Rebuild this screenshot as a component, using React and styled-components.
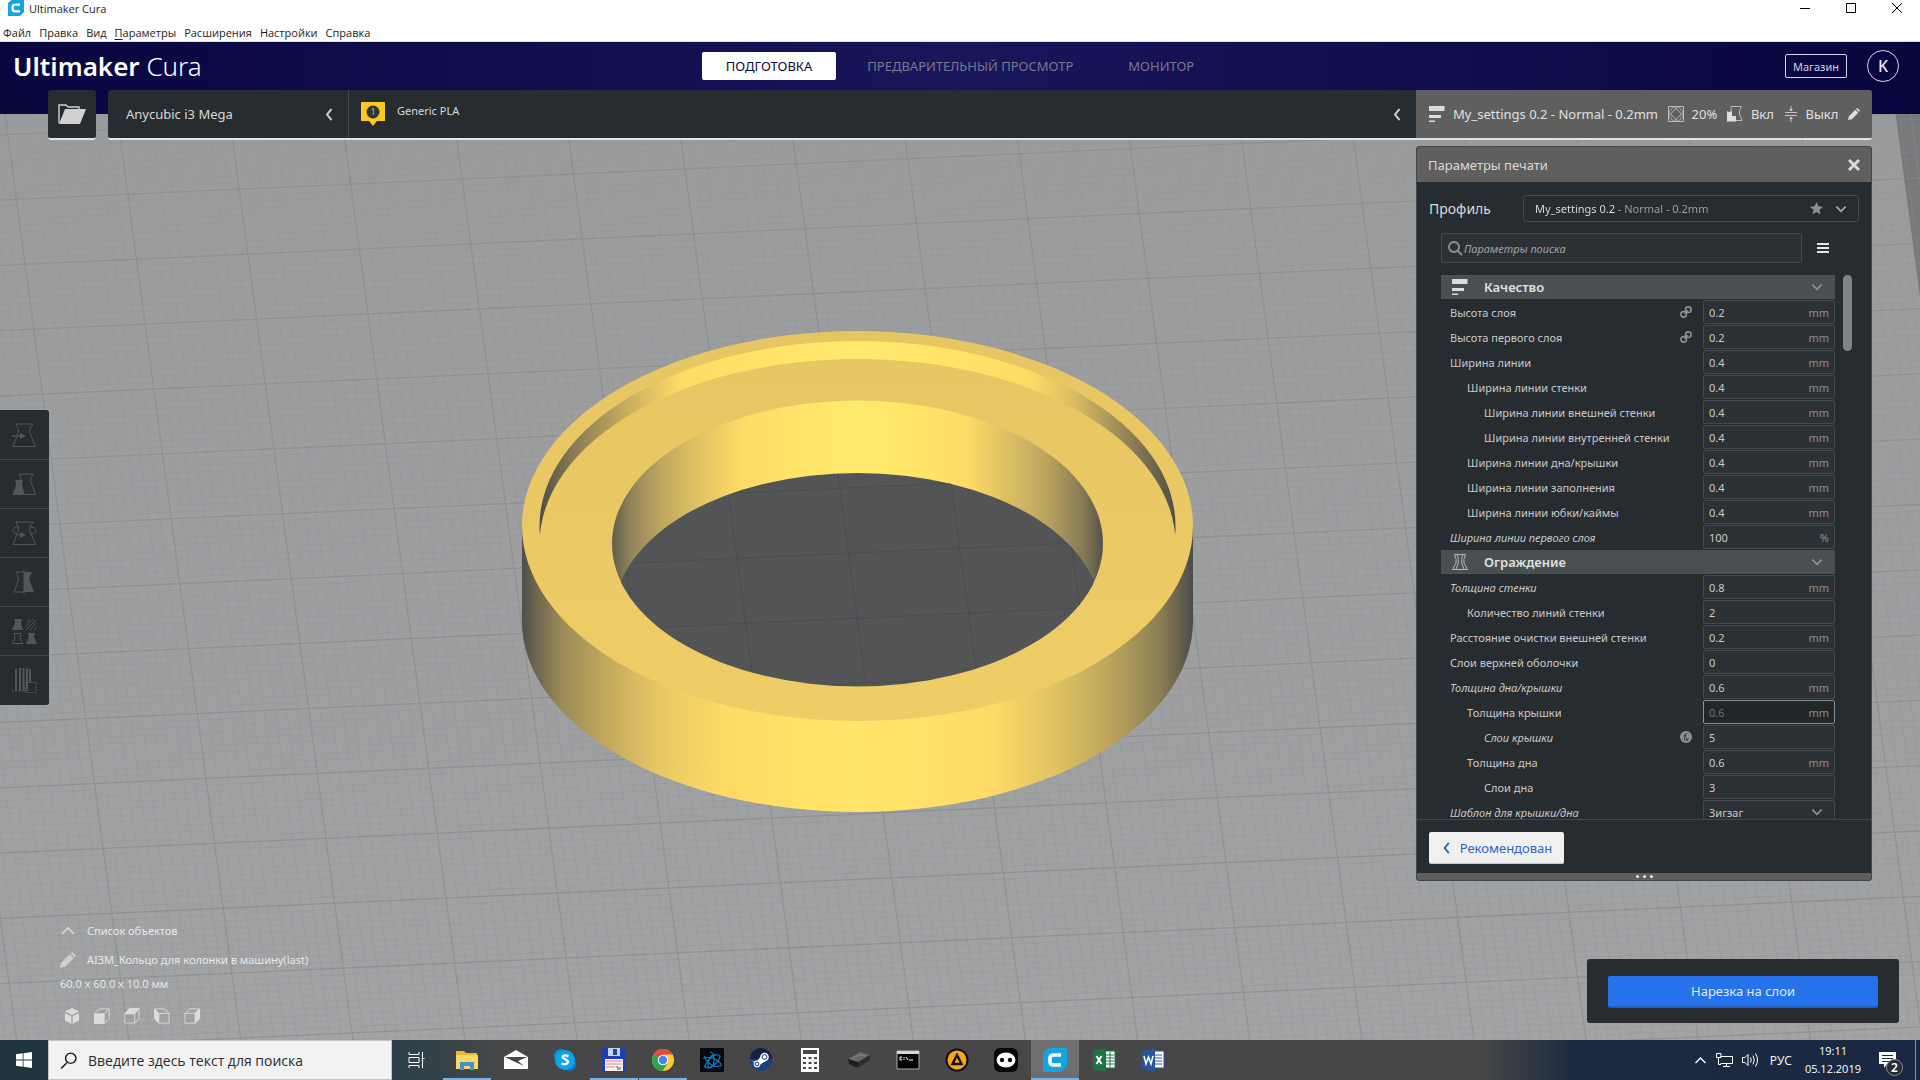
import React from "react";
import styled, { createGlobalStyle, css } from "styled-components";

const color = {
  panel: "#272c30",
  line: "#41474a",
  field: "#2c3135",
  fieldLine: "#44494d",
  text: "#dadada",
  dim: "#8c9092",
  grey: "#5f5f5f",
  category: "#4a4f52",
  blue: "#2672ea",
};

const GlobalStyle = createGlobalStyle`
  * { box-sizing: border-box; }
  body { margin: 0; background: #9b9c9d; }
  body, button, input, select {
    font-family: "Noto Sans", "Open Sans", sans-serif;
    font-size: 11px;
  }
  button { border: 0; padding: 0; background: none; color: inherit; cursor: pointer; }
  svg { display: block; flex: none; }
`;

/* ---------- window chrome ---------- */

const Page = styled.div`
  min-height: 100vh;
  display: flex;
  flex-direction: column;
`;

const WindowChrome = styled.header`
  background: #fff;
  color: #1c1c1c;
  height: 42px;
  flex: none;
  display: flex;
  flex-direction: column;
  overflow: hidden;
  font-family: "Open Sans", "Noto Sans", sans-serif;
  border-bottom: 1px solid #dcdcec;
`;

const TitleBar = styled.div`
  display: flex;
  align-items: center;
  height: 24px;
  padding: 0 0 8px 8px;
  gap: 5px;
  font-size: 11px;
`;

const WindowButtons = styled.div`
  display: flex;
  margin-left: auto;
  button {
    width: 46px;
    height: 16px;
    display: flex;
    align-items: center;
    justify-content: center;
  }
`;

const MenuBar = styled.nav`
  display: flex;
  gap: 8px;
  padding-left: 3px;
  height: 17px;
  align-items: center;
  button {
    font-family: inherit;
    font-size: 11px;
    line-height: 16px;
  }
  u { text-underline-offset: 2px; }
`;

/* ---------- stage ---------- */

const Stage = styled.main`
  position: relative;
  flex: 1;
  display: flex;
  flex-direction: column;
  overflow: hidden;
`;

const SceneCanvas = styled.svg`
  position: absolute;
  inset: 0;
  width: 100%;
  height: 100%;
`;

const AppHeader = styled.div`
  position: relative;
  height: 72px;
  margin-bottom: -24px;
  padding: 8px 13px 32px;
  display: grid;
  grid-template-columns: 1fr auto 1fr;
  align-items: center;
  background: linear-gradient(90deg, #08063f 0%, #131052 35%, #1a165c 50%, #131052 65%, #08063f 100%);
`;

const Logo = styled.div`
  color: #fff;
  font-size: 26px;
  line-height: 30px;
  font-weight: 600;
  span { font-weight: 300; }
`;

const Tabs = styled.nav`
  display: flex;
  gap: 7px;
`;

const Tab = styled.button`
  height: 28px;
  padding: 0 24px;
  border-radius: 2px;
  font-size: 13px;
  color: ${(p) => (p.$active ? "#0b0a45" : "#77788f")};
  background: ${(p) => (p.$active ? "#fff" : "transparent")};
`;

const Account = styled.div`
  display: flex;
  justify-content: flex-end;
  align-items: center;
  gap: 20px;
  padding-right: 8px;
`;

const ShopButton = styled.button`
  height: 24px;
  width: 62px;
  border: 1px solid #d5d5e6;
  border-radius: 2px;
  color: #d0d0e4;
  font-size: 11px;
`;

const Avatar = styled.button`
  width: 32px;
  height: 32px;
  border: 1px solid #d5d5e6;
  border-radius: 50%;
  color: #e4e4ee;
  font-size: 16px;
  font-weight: 500;
`;

const ConfigRow = styled.div`
  position: relative;
  display: flex;
  gap: 12px;
  padding: 0 48px;
`;

const barBlock = css`
  height: 50px;
  border-bottom: 2px solid #e4e4e4;
  border-radius: 3px;
  background: ${color.panel};
  color: ${color.text};
`;

const OpenButton = styled.button`
  ${barBlock}
  width: 48px;
  display: flex;
  align-items: center;
  justify-content: center;
`;

const ConfigBar = styled.div`
  ${barBlock}
  flex: 1;
  display: flex;
  overflow: hidden;
`;

const MachineButton = styled.button`
  width: 241px;
  padding: 0 12px 0 18px;
  display: flex;
  align-items: center;
  justify-content: space-between;
  border-right: 1px solid ${color.line};
  font-size: 13px;
`;

const MaterialButton = styled.button`
  flex: 1;
  padding: 0 12px;
  display: flex;
  align-items: center;
  gap: 12px;
  span {
    margin-right: auto;
    padding-bottom: 8px;
  }
`;

const SummaryButton = styled.button`
  width: 456px;
  padding: 0 12px 0 13px;
  display: flex;
  align-items: center;
  justify-content: space-between;
  background: ${color.grey};
  font-size: 13px;
  color: #e0e0e0;
`;

const SummaryItem = styled.span`
  display: flex;
  align-items: center;
  gap: 8px;
`;

const Workspace = styled.div`
  position: relative;
  flex: 1;
  display: flex;
  justify-content: space-between;
`;

const LeftColumn = styled.div`
  display: flex;
  flex-direction: column;
  padding-top: 270px;
`;

const RightColumn = styled.div`
  display: flex;
  flex-direction: column;
  align-items: flex-end;
  padding: 6px 21px 17px 0;
`;

const ToolStrip = styled.div`
  width: 49px;
  background: ${color.line};
  border: solid ${color.panel};
  border-width: 1px 0;
  border-radius: 0 3px 3px 0;
  overflow: hidden;
  display: flex;
  flex-direction: column;
  gap: 1px;
`;

const ToolButton = styled.button`
  height: 48px;
  background: ${color.panel};
  display: flex;
  align-items: center;
  justify-content: center;
  color: #50565a;
`;

const ObjectPanel = styled.section`
  margin-top: auto;
  padding: 0 0 12px 60px;
  color: #e6e6e6;
  display: flex;
  flex-direction: column;
  align-items: flex-start;
`;

const ObjectRow = styled.button`
  display: flex;
  align-items: center;
  gap: 11px;
  height: 29px;
  color: #e8e8e8;
  font-size: 11px;
`;

const ObjectSize = styled.div`
  line-height: 20px;
  font-size: 11px;
`;

const ViewButtons = styled.div`
  display: flex;
  gap: 6px;
  padding-top: 10px;
  button {
    width: 24px;
    height: 24px;
    display: flex;
    align-items: center;
    justify-content: center;
    color: #dcdcdc;
  }
`;

/* ---------- print settings panel ---------- */

const Panel = styled.section`
  width: 456px;
  margin-right: 27px;
  background: ${color.panel};
  border: 1px solid ${color.line};
  border-radius: 3px;
  color: ${color.text};
  display: flex;
  flex-direction: column;
  overflow: hidden;
`;

const PanelHeader = styled.div`
  height: 35px;
  padding: 0 9px 0 11px;
  display: flex;
  align-items: center;
  justify-content: space-between;
  background: ${color.grey};
  font-size: 13px;
  line-height: 16px;
  button { padding: 2px; }
`;

const ProfileRow = styled.div`
  display: flex;
  align-items: center;
  justify-content: space-between;
  padding: 13px 12px 11px;
  label { font-size: 14px; }
`;

const ProfileSelectBox = styled.div`
  width: 336px;
  height: 27px;
  display: grid;
  grid-template-columns: 1fr auto;
  align-items: center;
  border: 1px solid ${color.fieldLine};
  border-radius: 3px;
`;

const ProfileSelect = styled.select`
  grid-area: 1 / 1 / 2 / 3;
  appearance: none;
  width: 100%;
  height: 25px;
  border: 0;
  padding: 0 60px 0 11px;
  color: transparent;
  background: linear-gradient(90deg, #e2e2e2 92px, #9fa2a4 92px);
  background-clip: text;
  -webkit-background-clip: text;
`;

const ProfileIcons = styled.span`
  grid-area: 1 / 2 / 2 / 3;
  display: flex;
  align-items: center;
  gap: 12px;
  padding-right: 11px;
  pointer-events: none;
`;

const SearchRow = styled.div`
  display: flex;
  align-items: center;
  gap: 12px;
  padding: 0 40px 12px 24px;
`;

const SearchBox = styled.label`
  flex: 1;
  height: 30px;
  display: flex;
  align-items: center;
  gap: 1px;
  padding-left: 6px;
  border: 1px solid ${color.fieldLine};
  border-radius: 2px;
  background: ${color.field};
  input {
    flex: 1;
    border: 0;
    padding: 0;
    background: transparent;
    color: ${color.text};
    font-style: italic;
  }
  input::placeholder { color: #a0a3a5; }
`;

const MenuButton = styled.button`
  width: 17px;
  height: 24px;
  display: flex;
  align-items: center;
  justify-content: center;
`;

const ListFrame = styled.div`
  height: 545px;
  overflow: hidden;
  display: flex;
  align-items: flex-start;
  gap: 8px;
  padding-left: 24px;
  border-bottom: 1px solid ${color.line};
`;

const SettingsList = styled.div`
  width: 394px;
  display: flex;
  flex-direction: column;
  gap: 1px;
`;

const ScrollThumb = styled.div`
  width: 9px;
  height: 76px;
  border-radius: 5px;
  background: #808486;
`;

const Category = styled.button`
  height: 24px;
  padding: 0 12px 0 11px;
  display: flex;
  align-items: center;
  gap: 16px;
  background: ${color.category};
  color: #e0e0e0;
  font-size: 13px;
  font-weight: 600;
  span { margin-right: auto; }
`;

const SettingRow = styled.div`
  height: 24px;
  display: flex;
  align-items: center;
  padding-left: ${(p) => 9 + p.$level * 17}px;
  label {
    flex: 1;
    font-style: ${(p) => (p.$italic ? "italic" : "normal")};
    color: #c9cacb;
  }
`;

const Mark = styled.span`
  display: flex;
  padding-right: 11px;
  color: ${color.dim};
`;

const Field = styled.div`
  width: 132px;
  height: 24px;
  display: flex;
  align-items: center;
  padding: 0 5px;
  border: 1px solid ${(p) => (p.$disabled ? "#8a8e90" : color.fieldLine)};
  border-radius: 2px;
  background: ${(p) => (p.$disabled ? "#212628" : color.field)};
  color: ${color.dim};
  input, select {
    flex: 1;
    min-width: 0;
    width: 100%;
    appearance: none;
    border: 0;
    padding: 0;
    background: transparent;
    color: ${(p) => (p.$disabled ? "#6d7173" : "#c9cacb")};
  }
`;

const FieldArrow = styled.span`
  padding-right: 6px;
`;

const PanelFooter = styled.div`
  padding: 12px 12px 9px;
`;

const RecommendedButton = styled.button`
  width: 135px;
  height: 32px;
  display: flex;
  align-items: center;
  justify-content: center;
  gap: 7px;
  border-bottom: 1px solid #c8c8c8;
  border-radius: 2px;
  background: #f0f0f0;
  color: #2b66c4;
  font-size: 13px;
`;

const ResizeHandle = styled.div`
  height: 7px;
  display: flex;
  justify-content: center;
  align-items: center;
  gap: 4px;
  background: ${color.grey};
  i {
    width: 3px;
    height: 3px;
    border-radius: 50%;
    background: #efefef;
  }
`;

const ActionPanel = styled.div`
  margin-top: auto;
  width: 312px;
  padding: 17px 21px 15px;
  background: ${color.panel};
  border-radius: 3px;
`;

const SliceButton = styled.button`
  width: 100%;
  height: 32px;
  border-bottom: 2px solid #1d5cc4;
  border-radius: 2px;
  background: ${color.blue};
  color: #dfeafc;
  font-size: 13px;
`;

/* ---------- taskbar ---------- */

const Taskbar = styled.footer`
  height: 40px;
  flex: none;
  display: flex;
  align-items: stretch;
  color: #fff;
  font-family: "Open Sans", "Noto Sans", sans-serif;
  background: linear-gradient(90deg, #1f353e 0%, #2c4049 21%, #474747 26%, #474747 77%, #1d2b40 82%, #1a2742 100%);
`;

const TaskButton = styled.button`
  width: 48px;
  display: flex;
  align-items: center;
  justify-content: center;
  background: ${(p) => (p.$active ? "#6f6f6f" : "transparent")};
  box-shadow: ${(p) => (p.$running ? "inset 0 -2px #76b2e6" : "none")};
`;

const TaskApps = styled.div`
  display: flex;
  gap: 1px;
  margin-left: 3px;
`;

const TaskSearch = styled.label`
  width: 344px;
  display: flex;
  align-items: center;
  gap: 11px;
  padding-left: 11px;
  border: 1px solid #c4c4c4;
  background: #f2f2f2;
  input {
    flex: 1;
    border: 0;
    padding: 0;
    background: transparent;
    font-family: inherit;
    font-size: 14px;
  }
  input::placeholder { color: #2b2b2b; }
`;

const Tray = styled.div`
  margin-left: auto;
  display: flex;
  align-items: center;
  gap: 9px;
  font-size: 12px;
`;

const LanguageButton = styled.button`
  padding: 0 2px;
  font: inherit;
`;

const Clock = styled.button`
  padding: 0 2px;
  text-align: center;
  font-family: inherit;
  font-size: 11px;
  line-height: 18px;
`;

const NoticeButton = styled.button`
  position: relative;
  margin: 0 10px 0 7px;
`;

const NoticeCount = styled.span`
  position: absolute;
  left: 7px;
  top: 7px;
  width: 17px;
  height: 17px;
  border-radius: 50%;
  border: 1px solid #8a8f96;
  background: #262c34;
  font-size: 12px;
  line-height: 15px;
  font-weight: 600;
  text-align: center;
`;

const DesktopEdge = styled.button`
  width: 5px;
  align-self: stretch;
  border-left: 1px solid #8d95a1;
`;

/* ---------- drawings ---------- */

const fmt = (n) => n.toFixed(1);
const gridPath = (major) => {
  let d = "";
  for (let j = -20; j < 190; j++) {
    if ((j % 10 === 0) !== major) continue;
    const x = 8.5 + 11.21 * j;
    d += `M${fmt(x - 13.4)} 40L${fmt(x + 120.2)} 1040`;
  }
  for (let j = -70; j < 110; j++) {
    if ((j % 10 === 0) !== major) continue;
    const y = 461.3 + 6.53 * j;
    d += `M0 ${fmt(y)}L1920 ${fmt(y - 87.4)}`;
  }
  return d;
};
const MINOR = gridPath(false);
const MAJOR = gridPath(true);

const Stops = ({ list }) => list.map(([o, c]) => <stop key={o} offset={o} stopColor={c} />);

const Scene = () => (
  <SceneCanvas viewBox="0 42 1920 998" preserveAspectRatio="xMidYMid slice" aria-hidden="true">
    <defs>
      <linearGradient id="plate" x1="0" y1="0" x2="0" y2="1">
        <Stops list={[[0, "#999b9b"], [0.5, "#9d9ea0"], [1, "#a2a3a5"]]} />
      </linearGradient>
      <linearGradient id="outer">
        <Stops list={[[0, "#4e4e4c"], [0.02, "#6c654f"], [0.06, "#9b8b57"], [0.13, "#c4aa5e"], [0.2, "#e6c764"], [0.3, "#ffda66"], [0.42, "#ffe367"], [0.5, "#ffe568"], [0.6, "#ffe267"], [0.7, "#ffda66"], [0.8, "#dfc163"], [0.88, "#b9a25c"], [0.95, "#8c7f55"], [0.98, "#67614f"], [1, "#4a4a49"]]} />
      </linearGradient>
      <linearGradient id="inner">
        <Stops list={[[0, "#615c4c"], [0.04, "#94855a"], [0.1, "#bea65f"], [0.17, "#dfc164"], [0.27, "#ffdb66"], [0.4, "#ffe669"], [0.5, "#ffea6c"], [0.6, "#ffe669"], [0.72, "#ffdb66"], [0.8, "#dfc164"], [0.88, "#bea65f"], [0.96, "#857a56"], [1, "#55524b"]]} />
      </linearGradient>
      <linearGradient id="recess">
        <Stops list={[[0, "#4f4d48"], [0.05, "#857a53"], [0.12, "#bba35d"], [0.18, "#e4c564"], [0.22, "#ffdb66"], [0.38, "#ffe568"], [0.5, "#ffea6c"], [0.62, "#ffe568"], [0.77, "#ffdb66"], [0.84, "#d9bd63"], [0.92, "#978757"], [1, "#4f4d48"]]} />
      </linearGradient>
      <linearGradient id="face" gradientUnits="userSpaceOnUse" x1="0" y1="331" x2="0" y2="721">
        <Stops list={[[0, "#e6c563"], [1, "#efcd66"]]} />
      </linearGradient>
      <clipPath id="backHalf"><rect x="500" y="320" width="720" height="215" /></clipPath>
      <clipPath id="rimClip"><ellipse cx="857.5" cy="526" rx="318" ry="185" /></clipPath>
      <clipPath id="holeClip"><ellipse cx="857.5" cy="543.5" rx="245.5" ry="143" /></clipPath>
      <clipPath id="floorClip"><ellipse cx="857.5" cy="614" rx="243" ry="141" /></clipPath>
    </defs>
    <rect y="42" width="1920" height="998" fill="url(#plate)" />
    <path d="M1895 110L1920 297V110Z" fill="#77797b" />
    <path d={MINOR} fill="none" stroke="#8f9192" strokeWidth="1" opacity="0.28" />
    <path d={MAJOR} fill="none" stroke="#858789" strokeWidth="1.3" opacity="0.6" />
    <path d="M522 526V621A335.5 191 0 0 0 1193 621V526Z" fill="url(#outer)" />
    <ellipse cx="857.5" cy="526" rx="335.5" ry="195" fill="url(#face)" />
    <g clipPath="url(#backHalf)">
      <ellipse cx="857.5" cy="526" rx="318" ry="185" fill="url(#recess)" />
    </g>
    <g clipPath="url(#rimClip)">
      <ellipse cx="857.5" cy="544" rx="318" ry="185" fill="url(#face)" />
    </g>
    <ellipse cx="857.5" cy="543.5" rx="245.5" ry="143" fill="url(#inner)" />
    <g clipPath="url(#holeClip)">
      <ellipse cx="857.5" cy="614" rx="243" ry="141" fill="#525456" />
      <g clipPath="url(#floorClip)">
        <path d={MAJOR} stroke="#4a4c4e" strokeWidth="1" fill="none" />
      </g>
    </g>
  </SceneCanvas>
);

const stroke = { fill: "none", stroke: "currentColor" };

const Chevron = ({ dir = "left", size = 12, c = "#c8c8c8", w = 2 }) => {
  const d = { left: "M8.5 1L4 6.5L8.5 12", down: "M1.5 4L6.5 9L11.5 4", up: "M1.5 9L6.5 4L11.5 9" }[dir];
  return (
    <svg width={size} height={size} viewBox="0 0 13 13" fill="none" stroke={c} strokeWidth={w}><path d={d} /></svg>
  );
};

const CuraMark = ({ size }) => (
  <svg width={size} height={size} viewBox="0 0 24 24">
    <path d="M5 0H24V18L18 24H0V5Z" fill="#13a5e3" />
    <path d="M18 7H11Q7 7 7 10V14Q7 17 11 17H18" fill="none" stroke="#fff" strokeWidth="3.6" />
  </svg>
);

const FolderIcon = () => (
  <svg width="28" height="22" viewBox="0 0 28 22">
    <path d="M1 20V2H8L10 4H21V7" fill="none" stroke="#d0d0d0" strokeWidth="1.4" />
    <path d="M7 6H28L22 21H1Z" fill="#d0d0d0" />
  </svg>
);

const SpoolIcon = () => (
  <svg width="24" height="25" viewBox="0 0 24 25">
    <path d="M1 0H23Q24 0 24 1V19H16L12 24L8 19H0V1Q0 0 1 0Z" fill="#fdc721" />
    <circle cx="12" cy="10" r="6.5" fill="#30353a" />
    <text x="12" y="13" textAnchor="middle" fontSize="8" fill="#d8c070">1</text>
  </svg>
);

const LayersIcon = () => (
  <svg width="16" height="16" viewBox="0 0 16 16" fill="#dcdcdc">
    <path d="M0 0H15.500V5H0ZM0 9H12V12H0ZM0 14.500H6V16H0Z" />
  </svg>
);

const InfillIcon = () => (
  <svg width="16" height="16" viewBox="0 0 16 16" fill="none" stroke="#c4c4c4" strokeWidth="0.9">
    <path d="M.5.5H15.500V15.500H.5ZM.5 6L6 .5M.5 10L10 .5M6 15.500L15.500 6M10 15.500L15.500 10M10 .5L15.500 6M6 .5L15.500 10M.5 6L10 15.500M.5 10L6 15.500" />
  </svg>
);

const SupportIcon = () => (
  <svg width="16" height="16" viewBox="0 0 16 16">
    <path d="M4 6V.5H14.500Q11.500 5 12.500 8L15 14.500H9" fill="none" stroke="#b9b9b9" />
    <path d="M0 5Q3 7 5 5V10H9V15.500H0Z" fill="#dedede" />
  </svg>
);

const AdhesionIcon = () => (
  <svg width="14" height="16" viewBox="0 0 14 16" fill="none" stroke="#c4c4c4">
    <path d="M1 6.500H13M1 9.500H13M7 0V5M7 16V11" />
    <path d="M5 3H9L7 5.500ZM5 13H9L7 10.500Z" fill="#c4c4c4" stroke="none" />
  </svg>
);

const Pencil = ({ size = 12, c = "#dcdcdc" }) => (
  <svg width={size} height={size} viewBox="0 0 14 14" fill={c}>
    <path d="M0 14L1 9.500L8.500 2L12 5.500L4.500 13ZM9.300 1.200L10.200.4Q11 0 11.700.6L13.400 2.300Q14 3 13.500 3.800L12.700 4.600Z" />
  </svg>
);

const CloseIcon = () => (
  <svg width="12" height="12" viewBox="0 0 12 12" stroke="#dadada" strokeWidth="3"><path d="M1 1L11 11M11 1L1 11" /></svg>
);

const StarIcon = () => (
  <svg width="13" height="13" viewBox="0 0 24 24" fill="#8d9092"><path d="M12 0l3.500 8 8.500.8-6.400 5.700 1.900 8.500L12 18.500 4.500 23l1.900-8.500L0 8.800 8.500 8z" /></svg>
);

const SearchIcon = ({ size = 15, c = "#8d9092", w = 1.8, flip }) => (
  <svg width={size} height={size} viewBox="0 0 15 15" fill="none" stroke={c} strokeWidth={w}>
    {flip ? <path d="M6 9.500L1 14.500M9.500 1A4.500 4.500 0 1 1 9.490 1Z" /> : <path d="M9.500 9.500L14 14M6 1A5 5 0 1 1 5.990 1Z" />}
  </svg>
);

const LinkIcon = () => (
  <svg width="12" height="12" viewBox="0 0 12 12" {...stroke} strokeWidth="1.600">
    <circle cx="8.300" cy="3.700" r="2.800" /><circle cx="3.700" cy="8.300" r="2.800" /><path d="M4.200 7.800L7.800 4.200" />
  </svg>
);

const FxIcon = () => (
  <svg width="12" height="12" viewBox="0 0 12 12">
    <circle cx="6" cy="6" r="6" fill="currentColor" />
    <path d="M7 2.200Q5.400 2 5.200 4L4.400 9.500M3.700 4.700H6.500M6 7L8.300 10M8.500 7L5.800 10" fill="none" stroke="#272c30" strokeWidth="0.9" />
  </svg>
);

const WallIcon = () => (
  <svg width="16" height="16" viewBox="0 0 16 16" fill="none" stroke="#c2c2c2" strokeWidth="0.9">
    <path d="M2.500.5H13.500Q11 6 12 9L15.500 15.500H.5L4 9Q5 6 2.500.5ZM5.500 1Q7 6 6 10L4 15M10.500 1Q9 6 10 10L12 15" />
  </svg>
);

const TOOL_ICONS = [
  ["Перемещение", <><path d="M4 1H21Q17 7 17.500 9L23.500 23.500H1L6.500 9Q7 6 4 1Z" {...stroke} /><path d="M0 13H9" {...stroke} strokeWidth="1.500" /><path d="M8 10L14 13L8 16Z" fill="currentColor" /></>],
  ["Масштаб", <><path d="M7 2H21Q18 7 18.500 9L23.500 22.500H12M7 2Q9 5 9 8" {...stroke} /><path d="M3 8H11Q9.500 12 10.500 15L13 23H0L3.500 15Q4.500 12 3 8Z" fill="currentColor" /></>],
  ["Поворот", <><path d="M4 1H21Q17 7 17.500 9L23.500 23.500H1L6.500 9Q7 6 4 1Z" {...stroke} /><path d="M7 6Q1 6 1 9.500T8 14M18 6Q24 6 24 9.500T18 13" {...stroke} /><path d="M8 11L14 14L8 17Z" fill="currentColor" /></>],
  ["Отражение", <><path d="M12 2H4Q7 7 6.500 10L2 22H12M12 0V24" {...stroke} /><path d="M12 2H20Q17 7 17.500 10L22 22H12Z" fill="currentColor" /></>],
  ["Параметры модели", <><path d="M2 0H10L9 4L11 11H0L3 4ZM16 14H23L22 18L25 25H14L17 18Z" fill="currentColor" /><path d="M2 14.500H9L8 19L10.500 24.500H.5L3 19Z" {...stroke} /><path d="M15 4L18 0M14 8L21 0M14 11L24 1M18 11L24 4M22 11L25 8" {...stroke} /></>],
  ["Блокировка поддержек", <><path d="M3 1V23M7 0V23M10.500 0V23M14 0V23M17 1V14" {...stroke} strokeWidth="2" transform="translate(1 0)" /><path d="M0 23H13V14.500H24V24.500H13V19" {...stroke} strokeDasharray="2 1" /></>],
];

const CUBES = [
  ["3D-вид", <><path d="M9 0L17 4L9 8L1 4Z" fill="currentColor" /><path d="M1 5.500L8.300 9.300V18L1 14ZM17 5.500L9.700 9.300V18L17 14Z" fill="currentColor" /></>],
  ["Спереди", <><path d="M1 6L6 1H17V12L12 17M17 1L12 6" {...stroke} /><path d="M0 6H12V18H0Z" fill="currentColor" /></>],
  ["Сверху", <><path d="M1 6V17H12V6M12 17L17 12V1" {...stroke} /><path d="M0 7L6 0H18L12 7Z" fill="currentColor" /></>],
  ["Слева", <><path d="M6 6H17V17H6M1 1H12L17 6" {...stroke} /><path d="M0 0L6 6V18L0 12Z" fill="currentColor" /></>],
  ["Справа", <><path d="M12 6H1V17H12M1 6L6 1H17" {...stroke} /><path d="M18 0L12 6V18L18 12Z" fill="currentColor" /></>],
];

const I = ({ children, w = 24, h = 24 }) => <svg width={w} height={h} viewBox={`0 0 ${w} ${h}`}>{children}</svg>;

const APPS = [
  { name: "Проводник", running: true, icon: <I><path d="M1 3H9L11 5H22V21H1Z" fill="#f2b530" /><path d="M1 7H23V21H1Z" fill="#fbd768" /><path d="M5 22V14H19V22H15V18H9V22Z" fill="#3f93cf" /></I> },
  { name: "Почта", icon: <I><path d="M0 9L12 2L24 9V21H0Z" fill="#fff" /><path d="M1 9H23L14 13L20 18L9 13Z" fill="#474747" /></I> },
  { name: "Skype", icon: <I><circle cx="8" cy="8" r="7" fill="#0a8fe0" /><circle cx="16" cy="16" r="7" fill="#0a78d0" /><circle cx="12" cy="12" r="10" fill="#10a3ea" /><path d="M15.500 8.500Q12 6.500 9.800 8.300C8.500 11 15.500 11.500 15 14.300Q13.500 17.500 8.500 15.500" fill="none" stroke="#fff" strokeWidth="2.300" /></I> },
  { name: "Total Commander", running: true, icon: <I><path d="M0 0H24V24H2L0 22Z" fill="#1d3fb4" /><path d="M6 0H18V8H6Z" fill="#c8d3ee" /><path d="M11 1H15V7H11Z" fill="#1d3fb4" /><path d="M3 11H21V23H3Z" fill="#fbeef0" /><path d="M4 13H20M4 16H20M4 19H13" stroke="#e08a92" /><path d="M14 19H16V22M18 19V22" stroke="#555" fill="none" /></I> },
  { name: "Chrome", running: true, icon: <I><circle cx="12" cy="12" r="11" fill="#fcc934" /><path d="M12 12L2.500 6.500A11 11 0 0 1 21.500 6.500H12Z" fill="#e0493b" /><path d="M12 12L2.500 6.500A11 11 0 0 0 11.500 23L16.800 14.700Z" fill="#2da24f" /><circle cx="12" cy="12" r="5.200" fill="#fff" /><circle cx="12" cy="12" r="4.200" fill="#4284f0" /></I> },
  { name: "Battle.net", icon: <I><rect width="24" height="24" rx="1" fill="#060a10" /><g fill="none" stroke="#0f80c4" strokeWidth="1.100"><path d="M10 4Q14 4 14 12T9 20Q7 18 9 12T16 7" /><path d="M3 10Q12 8 18 13T19 18Q15 20 9 15T5 8" /><path d="M5 19Q6 13 12 9T20 8Q20 12 14 17T4 18" /></g></I> },
  { name: "Steam", icon: <I><circle cx="12" cy="12" r="11" fill="#17407c" /><path d="M1 11A11 11 0 0 1 23 11Z" fill="#142344" /><path d="M1 12L7 14.500L12 8L17 13L10 17Z" fill="#fff" /><circle cx="15.500" cy="9" r="4.300" fill="#fff" /><circle cx="15.500" cy="9" r="2.400" fill="none" stroke="#17305c" /><circle cx="8" cy="16" r="3.400" fill="#fff" /><circle cx="8" cy="16" r="1.900" fill="none" stroke="#17305c" /></I> },
  { name: "Калькулятор", icon: <I w={18}><path d="M0 0H18V24H0Z" fill="#fff" /><path d="M2 2H16V6H2Z" fill="#474747" /><path d="M2 9H5V11H2ZM7.500 9H10.500V11H7.500ZM13 9H16V11H13ZM2 14H5V16H2ZM7.500 14H10.500V16H7.500ZM13 14H16V16H13ZM2 19H5V21H2ZM7.500 19H10.500V21H7.500ZM13 19H16V21H13Z" fill="#474747" /></I> },
  { name: "Устройство", icon: <I><path d="M1 11L13 4L23 7L11 14Z" fill="#686868" /><path d="M1 11L11 14V20L2 16Z" fill="#1f1f1f" /><path d="M11 14L23 7V12L11 20Z" fill="#2e2e2e" /><path d="M6 10L13 6.500L18 8" stroke="#8c8c8c" fill="none" /></I> },
  { name: "Командная строка", icon: <I><path d="M1 3H23V21H1Z" fill="#050505" stroke="#aaa" /><path d="M1 3H23V6H1Z" fill="#d8d8d8" /><path d="M6 9H4V12H6M8 9V10M8 11V12M10 9L12 12M13 12H17" stroke="#fff" fill="none" /></I> },
  { name: "AIMP", icon: <I><circle cx="12" cy="12" r="11.500" fill="#111" /><circle cx="12" cy="12" r="9.500" fill="#f9a61a" /><path d="M12 7L16.500 16H7.500Z" fill="none" stroke="#111" strokeWidth="2.400" /></I> },
  { name: "Плеер", icon: <I><rect width="24" height="24" rx="6" fill="#060606" /><ellipse cx="12" cy="12" rx="9.500" ry="7.500" fill="#fff" /><circle cx="8" cy="12" r="2.200" fill="#111" /><circle cx="16" cy="12" r="2.200" fill="#111" /></I> },
  { name: "Cura", running: true, active: true, icon: <CuraMark size={24} /> },
  { name: "Excel", icon: <I><path d="M13 3H23V20H13Z" fill="#fff" stroke="#1f7244" /><path d="M14 7H22M14 10H22M14 13H22M14 16H22M18 4V19" stroke="#1f7244" /><path d="M1 3L14 0V24L1 21Z" fill="#1f7244" /><path d="M4.500 8L9.500 16M9.500 8L4.500 16" stroke="#fff" strokeWidth="2" /></I> },
  { name: "Word", icon: <I><path d="M13 3H23V20H13Z" fill="#fff" stroke="#2a5699" /><path d="M14 7H21M14 10H21M14 13H21M14 16H21" stroke="#2a5699" /><path d="M1 3L14 0V24L1 21Z" fill="#2a5699" /><path d="M3 8L5 16L7.500 9L10 16L12 8" fill="none" stroke="#fff" strokeWidth="1.500" /></I> },
];

/* ---------- data ---------- */

const MENUS = ["Файл", "Правка", "Вид", "Параметры", "Расширения", "Настройки", "Справка"];
const TABS = ["ПОДГОТОВКА", "ПРЕДВАРИТЕЛЬНЫЙ ПРОСМОТР", "МОНИТОР"];

const SETTINGS = [
  {
    title: "Качество",
    icon: <LayersIcon />,
    rows: [
      { label: "Высота слоя", value: "0.2", unit: "mm", mark: "link" },
      { label: "Высота первого слоя", value: "0.2", unit: "mm", mark: "link" },
      { label: "Ширина линии", value: "0.4", unit: "mm" },
      { label: "Ширина линии стенки", value: "0.4", unit: "mm", level: 1 },
      { label: "Ширина линии внешней стенки", value: "0.4", unit: "mm", level: 2 },
      { label: "Ширина линии внутренней стенки", value: "0.4", unit: "mm", level: 2 },
      { label: "Ширина линии дна/крышки", value: "0.4", unit: "mm", level: 1 },
      { label: "Ширина линии заполнения", value: "0.4", unit: "mm", level: 1 },
      { label: "Ширина линии юбки/каймы", value: "0.4", unit: "mm", level: 1 },
      { label: "Ширина линии первого слоя", value: "100", unit: "%", italic: true },
    ],
  },
  {
    title: "Ограждение",
    icon: <WallIcon />,
    rows: [
      { label: "Толщина стенки", value: "0.8", unit: "mm", italic: true },
      { label: "Количество линий стенки", value: "2", level: 1 },
      { label: "Расстояние очистки внешней стенки", value: "0.2", unit: "mm" },
      { label: "Слои верхней оболочки", value: "0" },
      { label: "Толщина дна/крышки", value: "0.6", unit: "mm", italic: true },
      { label: "Толщина крышки", value: "0.6", unit: "mm", level: 1, disabled: true },
      { label: "Слои крышки", value: "5", level: 2, italic: true, mark: "fx" },
      { label: "Толщина дна", value: "0.6", unit: "mm", level: 1 },
      { label: "Слои дна", value: "3", level: 2 },
      { label: "Шаблон для крышки/дна", value: "Зигзаг", italic: true, select: true },
    ],
  },
];

const Setting = ({ row, id }) => (
  <SettingRow $level={row.level || 0} $italic={row.italic}>
    <label htmlFor={id}>{row.label}</label>
    {row.mark && <Mark>{row.mark === "link" ? <LinkIcon /> : <FxIcon />}</Mark>}
    <Field $disabled={row.disabled}>
      {row.select ? (
        <>
          <select id={id}><option>{row.value}</option></select>
          <FieldArrow><Chevron dir="down" c={color.dim} /></FieldArrow>
        </>
      ) : (
        <>
          <input id={id} type="text" defaultValue={row.value} disabled={row.disabled} />
          {row.unit && <span>{row.unit}</span>}
        </>
      )}
    </Field>
  </SettingRow>
);

const PrintSettings = () => (
  <Panel>
    <PanelHeader>
      <span>Параметры печати</span>
      <button aria-label="Закрыть"><CloseIcon /></button>
    </PanelHeader>
    <ProfileRow>
      <label htmlFor="profile">Профиль</label>
      <ProfileSelectBox>
        <ProfileSelect id="profile"><option>My_settings 0.2 - Normal - 0.2mm</option></ProfileSelect>
        <ProfileIcons><StarIcon /><Chevron dir="down" c="#a4a7a9" /></ProfileIcons>
      </ProfileSelectBox>
    </ProfileRow>
    <SearchRow>
      <SearchBox>
        <SearchIcon />
        <input type="text" placeholder="Параметры поиска" aria-label="Параметры поиска" />
      </SearchBox>
      <MenuButton aria-label="Видимость параметров">
        <svg width="12" height="10" viewBox="0 0 12 10" fill="#e6e6e6"><path d="M0 0H12V2H0ZM0 4H12V6H0ZM0 8H12V10H0Z" /></svg>
      </MenuButton>
    </SearchRow>
    <ListFrame>
      <SettingsList>
        {SETTINGS.map((group, g) => (
          <React.Fragment key={group.title}>
            <Category>
              {group.icon}
              <span>{group.title}</span>
              <Chevron dir="down" c={color.dim} />
            </Category>
            {group.rows.map((row, i) => <Setting key={row.label} row={row} id={`setting-${g}-${i}`} />)}
          </React.Fragment>
        ))}
      </SettingsList>
      <ScrollThumb />
    </ListFrame>
    <PanelFooter>
      <RecommendedButton><Chevron c="#2b66c4" />Рекомендован</RecommendedButton>
    </PanelFooter>
    <ResizeHandle><i /><i /><i /></ResizeHandle>
  </Panel>
);

export default function App() {
  return (
    <Page>
      <GlobalStyle />
      <WindowChrome>
        <TitleBar>
          <CuraMark size={16} />
          <span>Ultimaker Cura</span>
          <WindowButtons>
            <button aria-label="Свернуть"><svg width="10" height="10"><path d="M0 5.500H10" stroke="#000" /></svg></button>
            <button aria-label="Развернуть"><svg width="10" height="10"><path d="M.5.5H9.500V9.500H.5Z" stroke="#000" fill="none" /></svg></button>
            <button aria-label="Закрыть окно"><svg width="10" height="10"><path d="M0 0L10 10M10 0L0 10" stroke="#000" /></svg></button>
          </WindowButtons>
        </TitleBar>
        <MenuBar>
          {MENUS.map((m) => <button key={m}>{m === "Параметры" ? <><u>П</u>араметры</> : m}</button>)}
        </MenuBar>
      </WindowChrome>
      <Stage>
        <Scene />
        <AppHeader>
          <Logo>Ultimaker <span>Cura</span></Logo>
          <Tabs>{TABS.map((t, i) => <Tab key={t} $active={i === 0}>{t}</Tab>)}</Tabs>
          <Account><ShopButton>Магазин</ShopButton><Avatar>K</Avatar></Account>
        </AppHeader>
        <ConfigRow>
          <OpenButton aria-label="Открыть файл"><FolderIcon /></OpenButton>
          <ConfigBar>
            <MachineButton>Anycubic i3 Mega<Chevron size={13} /></MachineButton>
            <MaterialButton><SpoolIcon /><span>Generic PLA</span><Chevron size={13} /></MaterialButton>
            <SummaryButton>
              <SummaryItem><LayersIcon />My_settings 0.2 - Normal - 0.2mm</SummaryItem>
              <SummaryItem><InfillIcon />20%</SummaryItem>
              <SummaryItem><SupportIcon />Вкл</SummaryItem>
              <SummaryItem><AdhesionIcon />Выкл</SummaryItem>
              <Pencil />
            </SummaryButton>
          </ConfigBar>
        </ConfigRow>
        <Workspace>
          <LeftColumn>
            <ToolStrip>
              {TOOL_ICONS.map(([name, icon]) => (
                <ToolButton key={name} aria-label={name}><svg width="25" height="25" viewBox="0 0 25 25">{icon}</svg></ToolButton>
              ))}
            </ToolStrip>
            <ObjectPanel>
              <ObjectRow><Chevron dir="up" size={16} c="#cfcfcf" w={1.6} />Список объектов</ObjectRow>
              <ObjectRow><Pencil size={16} c="#cfcfcf" />AI3M_Кольцо для колонки в машину(last)</ObjectRow>
              <ObjectSize>60.0 x 60.0 x 10.0 мм</ObjectSize>
              <ViewButtons>
                {CUBES.map(([name, icon]) => (
                  <button key={name} aria-label={name}><svg width="16" height="16" viewBox="0 0 18 18">{icon}</svg></button>
                ))}
              </ViewButtons>
            </ObjectPanel>
          </LeftColumn>
          <RightColumn>
            <PrintSettings />
            <ActionPanel><SliceButton>Нарезка на слои</SliceButton></ActionPanel>
          </RightColumn>
        </Workspace>
      </Stage>
      <Taskbar>
        <TaskButton aria-label="Пуск">
          <svg width="16" height="16" viewBox="0 0 16 16" fill="#fff"><path d="M0 2.300L6.700 1.300V7.600H0ZM7.500 1.200L16 0V7.600H7.500ZM0 8.400H6.700V14.700L0 13.700ZM7.500 8.400H16V16L7.500 14.800Z" /></svg>
        </TaskButton>
        <TaskSearch>
          <SearchIcon size={17} c="#111" w={1.2} flip />
          <input type="text" placeholder="Введите здесь текст для поиска" aria-label="Поиск" />
        </TaskSearch>
        <TaskButton aria-label="Представление задач">
          <svg width="17" height="16" viewBox="0 0 17 16" fill="none" stroke="#fff"><path d="M1 0V2.500H11V0M1 16V13.500H11V16M1 5.500H11V10.500H1ZM14.500 0V16M13.500 6.500H16.500" /></svg>
        </TaskButton>
        <TaskApps>
          {APPS.map((a) => <TaskButton key={a.name} aria-label={a.name} $running={a.running} $active={a.active}>{a.icon}</TaskButton>)}
        </TaskApps>
        <Tray>
          <button aria-label="Скрытые значки"><Chevron dir="up" c="#fff" w={1.3} size={13} /></button>
          <button aria-label="Сеть"><svg width="17" height="15" viewBox="0 0 17 15" fill="none" stroke="#fff"><path d="M4.500 3.500H16.500V10.500H4.500M10.500 10.500V13M7 13.500H14M.5.5H5V4.500H.5ZM2.500 4.500V11.500H5" /></svg></button>
          <button aria-label="Громкость"><svg width="17" height="14" viewBox="0 0 17 14" fill="none" stroke="#fff"><path d="M.5 4.500H3L6 1.500V12.500L3 9.500H.5ZM8.500 4.500Q10 7 8.500 9.500M11 2.500Q13.500 7 11 11.500M13.500.5Q17.500 7 13.500 13.500" /></svg></button>
          <LanguageButton>РУС</LanguageButton>
          <Clock>19:11<br />05.12.2019</Clock>
          <NoticeButton aria-label="Уведомления: 2">
            <svg width="17" height="16" viewBox="0 0 17 16"><path d="M0 0H17V12H8L5 16V12H0Z" fill="#fff" /><path d="M3 3.500H14M3 6.500H14M3 9.500H10" stroke="#1b2843" /></svg>
            <NoticeCount>2</NoticeCount>
          </NoticeButton>
          <DesktopEdge aria-label="Свернуть все окна" />
        </Tray>
      </Taskbar>
    </Page>
  );
}
